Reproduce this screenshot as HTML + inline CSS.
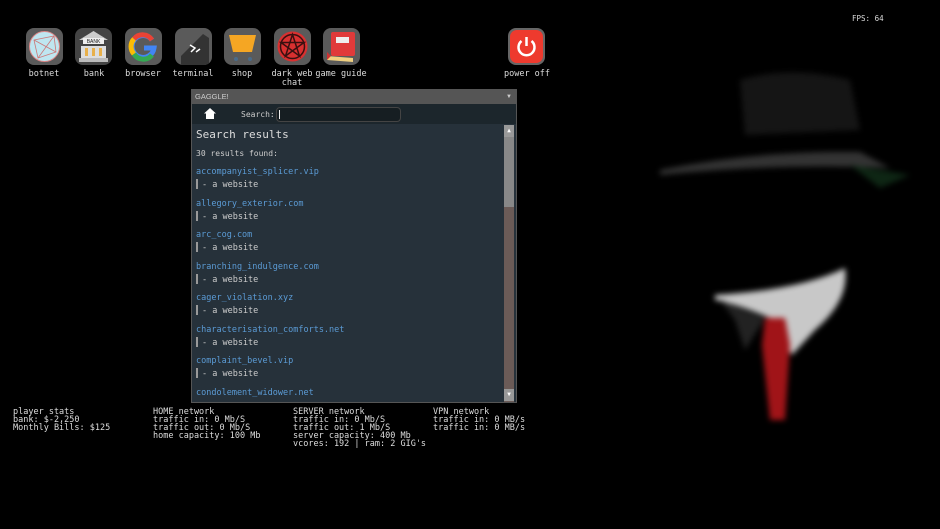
<!DOCTYPE html>
<html><head><style>
body{margin:0;width:940px;height:529px;background:#000;overflow:hidden;position:relative;font-family:"DejaVu Sans Mono","Liberation Mono",monospace;color:#ddd}
.ic{position:absolute;top:28px;width:37px;height:37px;border-radius:8px;background:#5a5a5a;overflow:hidden}
.lb{position:absolute;top:70px;font-size:8.5px;color:#ddd;text-align:center;width:70px;line-height:9px}
.t{position:absolute;font-size:8.5px;line-height:8px;white-space:pre;color:#ddd}
.win{position:absolute;left:191px;top:89px;width:324px;height:312px;background:#26313a;border:1px solid #555}
.a{position:absolute;left:4px;font-size:8.5px;color:#5b9bd5}
.s{position:absolute;left:4px;font-size:8.5px;color:#ccc}
.s i{display:inline-block;width:2px;height:10px;background:#999;vertical-align:-2px;margin-right:4px}
</style></head><body>
<svg style="position:absolute;left:0;top:0;filter:blur(3px)" width="940" height="529">
<path d="M740 80 Q790 65 850 80 L860 130 L745 135Z" fill="#151515"/>
<path d="M660 170 Q760 150 860 152 L890 168 Q780 163 660 175Z" fill="#333"/>
<path d="M850 165 L910 175 L880 188Z" fill="#0e2614"/>
<path d="M715 295 Q800 290 845 268 Q850 300 815 330 L792 355 L770 318 Q740 305 715 300Z" fill="#c8c8c8"/>
<path d="M720 300 L765 318 L745 350 L735 320Z" fill="#222"/>
<path d="M765 318 L785 318 L790 345 L785 420 L770 420 L762 345Z" fill="#a01418"/>
</svg>
<div class="t" style="left:852px;top:15px;font-size:7.5px">FPS: 64</div>

<div class="ic" style="left:26px"><svg width="37" height="37"><circle cx="18.5" cy="18.5" r="15" fill="#bfe6f0" stroke="#d88" stroke-width="1"/><path d="M8 12L28 8L30 24L12 30Z M8 12L30 24 M28 8L12 30" stroke="#c77" stroke-width=".8" fill="none"/></svg></div>
<div class="lb" style="left:9px">botnet</div>
<div class="ic" style="left:75px;background:#444"><svg width="37" height="37"><path d="M4 12L18.5 3L33 12Z" fill="#ccc"/><rect x="8" y="10" width="21" height="6" fill="#eee"/><text x="18.5" y="15" font-size="5" text-anchor="middle" fill="#222" font-family="Liberation Sans">BANK</text><rect x="6" y="18" width="25" height="12" fill="#ddd"/><rect x="10" y="20" width="3" height="8" fill="#e8b04a"/><rect x="17" y="20" width="3" height="8" fill="#e8b04a"/><rect x="24" y="20" width="3" height="8" fill="#e8b04a"/><rect x="4" y="30" width="29" height="4" fill="#bbb"/></svg></div>
<div class="lb" style="left:59px">bank</div>
<div class="ic" style="left:125px"><svg width="37" height="37"><path d="M27 12A11 11 0 1 0 29 20L19 20" stroke="#4285f4" stroke-width="5" fill="none"/><path d="M27 12A11 11 0 0 0 9 11" stroke="#ea4335" stroke-width="5" fill="none"/><path d="M9 11A11 11 0 0 0 9 26" stroke="#fbbc05" stroke-width="5" fill="none"/><path d="M9 26A11 11 0 0 0 27 27" stroke="#34a853" stroke-width="5" fill="none"/></svg></div>
<div class="lb" style="left:108px">browser</div>
<div class="ic" style="left:175px"><svg width="37" height="37"><path d="M6 28L28 6L34 10L34 37L6 37Z" fill="#333"/><path d="M15 17L20 20L16 24M21 24L25 21" stroke="#fff" stroke-width="1.5" fill="none"/></svg></div>
<div class="lb" style="left:158px">terminal</div>
<div class="ic" style="left:224px"><svg width="37" height="37"><path d="M5 7H32L28 24H9Z" fill="#f5a623"/><circle cx="12" cy="31" r="2" fill="#4a6b8a"/><circle cx="26" cy="31" r="2" fill="#4a6b8a"/></svg></div>
<div class="lb" style="left:207px">shop</div>
<div class="ic" style="left:274px"><svg width="37" height="37"><circle cx="18.5" cy="18.5" r="15" fill="#d93030"/><circle cx="18.5" cy="18.5" r="12" fill="none" stroke="#3a1010" stroke-width="1.5"/><path d="M18.5 6.5L25.5 28L7 14.5H30L11.5 28Z" fill="none" stroke="#3a1010" stroke-width="1.5"/></svg></div>
<div class="lb" style="left:257px">dark web<br>chat</div>
<div class="ic" style="left:323px"><svg width="37" height="37"><rect x="8" y="4" width="24" height="24" rx="2" fill="#e03a3a"/><rect x="13" y="9" width="13" height="6" fill="#eee"/><path d="M4 28L30 30L30 34L4 32Z" fill="#f0d080"/><path d="M4 24L8 28L4 32Z" fill="#c33"/></svg></div>
<div class="lb" style="left:306px">game guide</div>
<div class="ic" style="left:508px;background:#666"><svg width="37" height="37"><rect x="2" y="2" width="33" height="33" rx="7" fill="#ee3a2e"/><path d="M13.5 13A8 8 0 1 0 23.5 13" stroke="#fff" stroke-width="2.5" fill="none"/><path d="M18.5 9V18" stroke="#fff" stroke-width="2.5"/></svg></div>
<div class="lb" style="left:492px">power off</div>

<div class="win">
 <div style="position:absolute;left:0;top:0;width:324px;height:14px;background:#555;font-family:'Liberation Sans',sans-serif;font-size:7.5px;color:#ccc;line-height:14px;padding-left:3px;box-sizing:border-box">GAGGLE!<span style="position:absolute;right:4px;font-size:6px">▼</span></div>
 <div style="position:absolute;left:0;top:14px;width:324px;height:20px;background:#1c262c">
  <svg style="position:absolute;left:12px;top:4px" width="12" height="11"><path d="M6 0L12 5.5H10V11H2V5.5H0Z" fill="#fff"/></svg>
  <span style="position:absolute;left:49px;top:6px;font-size:8px;color:#ccc">Search:</span>
  <div style="position:absolute;left:84px;top:3px;width:123px;height:13px;border:1px solid #444;border-radius:4px;background:#161e22"><div style="position:absolute;left:2px;top:2px;width:1px;height:9px;background:#eee"></div></div>
 </div>
 <div style="position:absolute;left:0;top:35px;width:324px;height:277px;overflow:hidden">
  <div class="s" style="top:3px;font-size:11px;color:#ddd">Search results</div>
  <div class="s" style="top:24px;font-size:8px">30 results found:</div>
  <div class="a" style="top:42px">accompanyist_splicer.vip</div><div class="s" style="top:54px"><i></i>- a website</div>
  <div class="a" style="top:74px">allegory_exterior.com</div><div class="s" style="top:86px"><i></i>- a website</div>
  <div class="a" style="top:105px">arc_cog.com</div><div class="s" style="top:117px"><i></i>- a website</div>
  <div class="a" style="top:137px">branching_indulgence.com</div><div class="s" style="top:149px"><i></i>- a website</div>
  <div class="a" style="top:168px">cager_violation.xyz</div><div class="s" style="top:180px"><i></i>- a website</div>
  <div class="a" style="top:200px">characterisation_comforts.net</div><div class="s" style="top:212px"><i></i>- a website</div>
  <div class="a" style="top:231px">complaint_bevel.vip</div><div class="s" style="top:243px"><i></i>- a website</div>
  <div class="a" style="top:263px">condolement_widower.net</div>
  <div style="position:absolute;left:312px;top:0;width:10px;height:277px;background:#6b5b57"></div>
  <div style="position:absolute;left:312px;top:12px;width:10px;height:70px;background:#888"></div>
  <div style="position:absolute;left:312px;top:0;width:10px;height:12px;background:#999;font-size:6px;color:#fff;text-align:center;line-height:12px">▲</div>
  <div style="position:absolute;left:312px;top:264px;width:10px;height:12px;background:#999;font-size:6px;color:#fff;text-align:center;line-height:12px">▼</div>
 </div>
</div>

<div class="t" style="left:13px;top:408px">player stats
bank: $-2,250
Monthly Bills: $125</div>
<div class="t" style="left:153px;top:408px">HOME network
traffic in: 0 Mb/S
traffic out: 0 Mb/S
home capacity: 100 Mb</div>
<div class="t" style="left:293px;top:408px">SERVER network
traffic in: 0 Mb/S
traffic out: 1 Mb/S
server capacity: 400 Mb
vcores: 192 | ram: 2 GIG's</div>
<div class="t" style="left:433px;top:408px">VPN network
traffic in: 0 MB/s
traffic in: 0 MB/s</div>
</body></html>
